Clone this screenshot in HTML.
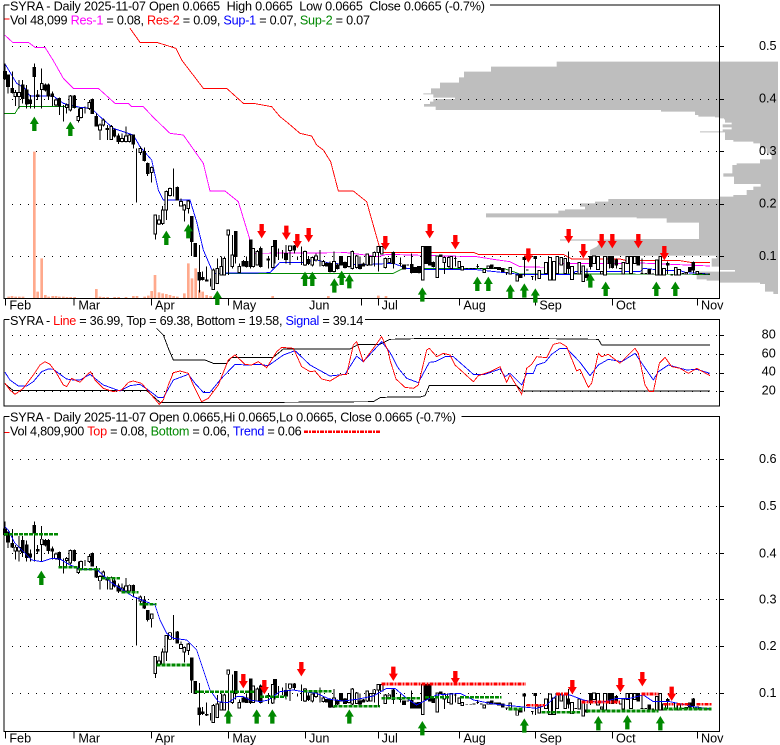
<!DOCTYPE html>
<html lang="en"><head><meta charset="utf-8"><title>SYRA chart</title>
<style>
html,body{margin:0;padding:0;background:#fff;width:780px;height:745px;overflow:hidden}
svg{display:block}
text{font-family:"Liberation Sans",Arial,sans-serif;font-size:38px;fill:#000}
.l{fill:none;stroke-width:2.7;shape-rendering:crispEdges}
.f{fill:none;stroke-width:3;shape-rendering:crispEdges}
.d{fill:none;stroke-width:8;shape-rendering:crispEdges}
</style></head><body>
<svg xmlns="http://www.w3.org/2000/svg" width="780" height="745" viewBox="0 0 2340 2235">
<defs>
<pattern id="dots" patternUnits="userSpaceOnUse" x="12" y="0" width="24" height="3"><rect x="0" y="0" width="3" height="3" fill="#000"/></pattern>
<path id="u" fill="#008800" d="M0,0l13.5,22h-7v21h-13v-21h-7z"/>
<path id="n" fill="#ff0000" d="M0,43l13.5,-22h-7v-21h-13v21h-7z"/>
<g id="c" shape-rendering="crispEdges">
<path fill="none" stroke="#000" stroke-width="3" d="M15,190V240M24,225V280M37,215V280M46,270V318M57,240V325M68,240V310M80,255V325M91,285V325M103,190V325M113,270V300M125,205V325M136,250V275M145,250V300M157,275V318M168,295V320M178,292V345M190,315V365M200,310V340M211,285V335M223,285V325M235,325V368M243,322V355M255,320V340M268,300V330M277,295V340M289,340V380M300,370V420M310,355V380M322,375V420M334,375V420M343,385V412M355,400V432M366,400V428M378,380V428M388,402V428M400,403V445M409,445V608M421,440V465M433,442V485M443,488V528M455,500V548M466,643V718M477,645V675M488,618V675M499,572V660M510,563V590M521,505V590M532,560V602M543,595V620M553,612V665M565,600V640M575,650V768M586,730V768M598,735V878M608,815V842M620,800V845M632,835V860M640,805V870M652,775V850M664,770V825M673,770V825M685,690V825M697,705V805M707,695V790M718,790V818M730,780V800M740,770V802M752,720V805M760,745V802M772,750V797M782,740V803M805,768V805M818,738V805M825,722V790M835,745V780M848,750V775M858,735V790M870,738V795M883,735V760M893,770V780M905,740V795M915,752V798M925,770V795M937,770V800M948,760V785M960,750V800M970,780V800M980,788V800M990,785V818M1002,755V818M1013,790V808M1023,768V797M1035,785V806M1047,768V803M1057,752V808M1070,765V806M1080,770V808M1090,788V800M1102,760V798M1123,755V800M1135,738V815M1156,772V806M1180,755V805M1201,772V800M1235,760V820M1257,798V820M1279,738V792M1289,738V797M1300,785V802M1333,770V822M1346,770V802M1366,770V800M1433,792V806M1520,818V825M1573,770V830M1597,830V840M1606,770V842M1705,755V820M1761,805V835M1772,768V808M1828,768V805M1837,768V805M1849,775V805M1926,775V822M2003,785V822M2080,785V820"/>
<path fill="#000" stroke="#000" stroke-width="3" d="M11,215h8V235h-8zM20,225h8V260h-8zM33,265h8V277h-8zM64,255h8V295h-8zM76,270h8V312h-8zM87,300h8V310h-8zM99,203h8V230h-8zM109,285h8V290h-8zM132,255h8V270h-8zM141,255h8V288h-8zM153,282h8V290h-8zM174,295h8V318h-8zM219,288h8V322h-8zM273,298h8V340h-8zM285,350h8V378h-8zM318,385h8V388h-8zM339,390h8V408h-8zM351,408h8V425h-8zM396,405h8V432h-8zM429,455h8V482h-8zM439,490h8V520h-8zM528,562h8V600h-8zM571,650h8V725h-8zM582,730h8V770h-8zM594,818h8V840h-8zM604,832h8V838h-8zM616,840h8V843h-8zM703,695h8V770h-8zM726,785h8V798h-8zM736,785h8V800h-8zM748,720h8V800h-8zM778,745h8V800h-8zM801,777h8V780h-8zM821,722h8V768h-8zM854,760h8V778h-8zM879,738h8V750h-8zM921,778h8V790h-8zM976,790h8V798h-8zM986,790h8V815h-8zM1009,795h8V805h-8zM1019,770h8V795h-8zM1031,788h8V803h-8zM1076,795h8V805h-8zM1086,792h8V798h-8zM1176,757h8V790h-8zM1208,795h8V807h-8zM1231,793h8V818h-8zM1242,802h8V818h-8zM1253,800h8V818h-8zM1275,740h8V790h-8zM1285,740h8V795h-8zM1296,787h8V800h-8zM1318,765h8V770h-8zM1471,795h8V805h-8zM1483,802h8V806h-8zM1493,802h8V808h-8zM1504,805h8V815h-8zM1558,823h8V832h-8zM1569,772h8V778h-8zM1602,770h8V776h-8zM1701,788h8V805h-8zM1757,825h8V832h-8zM1768,770h8V800h-8zM1824,770h8V790h-8zM1833,770h8V803h-8zM1845,780h8V795h-8zM1911,770h8V795h-8zM1944,808h8V822h-8zM1999,790h8V795h-8zM2065,802h8V815h-8zM2076,788h8V810h-8z"/>
<path fill="#fff" stroke="#000" stroke-width="3" d="M42,277h8V290h-8zM53,277h8V290h-8zM121,250h8V268h-8zM164,300h8V315h-8zM196,315h8V322h-8zM207,288h8V330h-8zM231,350h8V362h-8zM239,325h8V352h-8zM264,308h8V325h-8zM296,375h8V390h-8zM306,360h8V375h-8zM330,380h8V418h-8zM362,415h8V425h-8zM374,408h8V425h-8zM384,405h8V425h-8zM417,445h8V458h-8zM451,502h8V518h-8zM462,645h8V702h-8zM473,660h8V672h-8zM484,630h8V670h-8zM495,575h8V630h-8zM506,565h8V587h-8zM539,605h8V618h-8zM549,615h8V630h-8zM561,603h8V625h-8zM636,810h8V868h-8zM648,805h8V850h-8zM660,800h8V825h-8zM669,775h8V825h-8zM681,690h8V705h-8zM693,765h8V800h-8zM714,800h8V818h-8zM756,745h8V800h-8zM768,755h8V795h-8zM814,740h8V802h-8zM866,738h8V752h-8zM911,755h8V795h-8zM933,772h8V795h-8zM944,768h8V780h-8zM966,785h8V797h-8zM998,785h8V815h-8zM1043,770h8V800h-8zM1053,755h8V805h-8zM1066,768h8V803h-8zM1098,762h8V795h-8zM1108,770h8V795h-8zM1119,757h8V770h-8zM1131,740h8V758h-8zM1141,740h8V762h-8zM1152,775h8V803h-8zM1164,775h8V787h-8zM1264,740h8V840h-8zM1308,768h8V832h-8zM1329,772h8V788h-8zM1342,772h8V800h-8zM1350,770h8V805h-8zM1374,785h8V803h-8zM1383,800h8V810h-8zM1449,808h8V818h-8zM1461,798h8V806h-8zM1527,802h8V822h-8zM1548,825h8V843h-8zM1614,812h8V835h-8zM1634,788h8V820h-8zM1646,772h8V840h-8zM1658,785h8V840h-8zM1668,770h8V820h-8zM1680,772h8V795h-8zM1692,775h8V820h-8zM1712,800h8V838h-8zM1734,788h8V822h-8zM1746,798h8V845h-8zM1778,768h8V790h-8zM1790,770h8V808h-8zM1801,815h8V822h-8zM1811,770h8V825h-8zM1866,788h8V822h-8zM1878,770h8V790h-8zM1889,770h8V820h-8zM1900,770h8V790h-8zM1966,780h8V825h-8zM1977,770h8V825h-8zM1988,805h8V825h-8zM2023,802h8V825h-8zM2033,808h8V825h-8zM2055,817h8V822h-8zM2088,815h8V822h-8z"/>
<path fill="none" stroke="#000" stroke-width="3" d="M1197,790h8M1219,795h8M1362,775h8M1396,806h8M1408,806h8M1418,805h8M1429,800h8M1440,805h8M1516,818h8M1578,810h8M1593,830h8M1723,820h8M1857,805h8M1922,820h8M1933,820h8M1954,822h8M2011,825h8M2044,820h8M2099,820h8M2111,822h8M2122,822h8"/>
</g>
</defs>

<!-- volume by price -->
<path fill="#bebebe" transform="translate(1560,0)" d="M774,185H110V200H-87V215H-168V232H-183V248H-240V265H-267V280H-290V283H-260V293H-195V297H-260V305H-270V312H-288V320H-253V330H423V335H525V345H535V350H585V352H600V355H612V358H615V368H635V373H608V382H635V388H608V394H540V397H615V420H640V425H700V430H720V445H740V460H755V478H720V490H650V495H637V520H610V530H642V552H722V560H700V570H680V585H640V590H600V597H265V605H225V610H180V620H195V628H135V632H115V640H-102V652H350V655H440V668H537V717H360V718H120V722H245L230,740L210,750V767H590V775H575V800H600V810H645V815H530V838H560V842H600V848H720V852H735V875H760V882H774Z"/>

<!-- volume bars -->
<path fill="#ffa98c" d="M99,455h8V895h-8zM109,875h8V895h-8zM121,775h8V895h-8zM132,885h8V895h-8zM142,890h8V895h-8zM154,888h8V895h-8zM164,888h8V895h-8zM174,890h8V895h-8zM285,867h8V895h-8zM32,888h8V895h-8zM22,890h8V895h-8zM43,890h8V895h-8zM54,890h8V895h-8zM65,890h8V895h-8zM186,890h8V895h-8zM197,891h8V895h-8zM208,891h8V895h-8zM220,891h8V895h-8zM296,890h8V895h-8zM307,891h8V895h-8zM319,891h8V895h-8zM340,891h8V895h-8zM352,891h8V895h-8zM374,891h8V895h-8zM396,888h8V895h-8zM407,888h8V895h-8zM430,890h8V895h-8zM441,887h8V895h-8zM451,873h8V895h-8zM461,825h8V895h-8zM473,877h8V895h-8zM484,880h8V895h-8zM495,882h8V895h-8zM506,885h8V895h-8zM517,888h8V895h-8zM528,890h8V895h-8zM549,880h8V895h-8zM561,790h8V895h-8zM572,835h8V895h-8zM583,805h8V895h-8zM594,870h8V895h-8zM604,875h8V895h-8zM616,885h8V895h-8zM628,888h8V895h-8zM814,888h8V895h-8zM981,888h8V895h-8zM1131,887h8V895h-8zM1154,888h8V895h-8z"/>

<!-- grids -->
<g fill="url(#dots)" shape-rendering="crispEdges">
<rect x="36" y="138" width="2127" height="3"/><rect x="36" y="297" width="2127" height="3"/><rect x="36" y="453" width="2127" height="3"/><rect x="36" y="612" width="2127" height="3"/><rect x="36" y="768" width="2127" height="3"/>
<rect x="36" y="1005" width="2127" height="3"/><rect x="36" y="1062" width="2127" height="3"/><rect x="36" y="1119" width="2127" height="3"/><rect x="36" y="1173" width="2127" height="3"/>
<rect x="36" y="1377" width="2127" height="3"/><rect x="36" y="1518" width="2127" height="3"/><rect x="36" y="1659" width="2127" height="3"/><rect x="36" y="1797" width="2127" height="3"/><rect x="36" y="1938" width="2127" height="3"/><rect x="36" y="2079" width="2127" height="3"/>
</g>

<!-- frames and ticks -->
<path class="f" stroke="#000" d="M12,15H28M1470,15H2158V895H12V15M12,958H28M1095,958H2158V1218H12V958M12,1250H28M1385,1250H2158V2194H12V1250"/>
<path class="f" stroke="#000" d="M2158,139.500H2172M2158,298.500H2172M2158,454.500H2172M2158,613.500H2172M2158,769.500H2172M2158,1006.500H2172M2158,1063.500H2172M2158,1120.500H2172M2158,1174.500H2172M2158,1378.500H2172M2158,1519.500H2172M2158,1660.500H2172M2158,1798.500H2172M2158,1939.500H2172M2158,2080.500H2172"/>
<path class="f" stroke="#000" d="M17,895V917M222,895V917M455,895V917M686,895V917M1085,895V917M1135,895V917M1378,895V917M1606,895V917M1837,895V917M2092,895V917M17,2194V2216M222,2194V2216M455,2194V2216M686,2194V2216M916,2194V2216M1135,2194V2216M1378,2194V2216M1606,2194V2216M1837,2194V2216M2092,2194V2216"/>
<path class="f" stroke="#ff0000" d="M14,57H28M14,1297H28"/>

<!-- top panel overlays -->
<polyline class="l" stroke="#008800" points="14,340 45,340 58,319 170,319 240,322"/>
<polyline class="l" stroke="#008800" points="640,820 1180,820 1210,805 1510,805 1560,822 2130,823"/>
<polyline class="l" stroke="#ff00ff" points="14,105 38,127 85,127 105,142 135,142 160,182 190,235 220,265 295,265 345,310 385,310 395,320 430,320 460,352 510,400 550,405 610,490 630,573 675,573 715,605 750,720 755,760 1040,758 1135,770 1160,763 1340,768 1430,770 1480,778 1530,785 1560,800 1635,802 1660,790 1870,790 1875,787 2130,798"/>
<polyline class="l" stroke="#ff0000" points="390,85 420,127 470,127 528,145 545,180 610,265 680,265 730,310 760,310 815,320 840,350 865,370 900,400 935,408 950,435 970,450 992,485 1015,573 1060,573 1100,605 1138,740 1150,757 1420,757 1435,763 1690,763 1715,777 1860,777 1880,782 2040,782 2070,787 2130,787"/>
<polyline class="l" stroke="#0000ff" points="14,190 50,250 75,265 90,288 160,288 190,310 240,322 275,325 300,350 340,385 400,405 420,440 455,480 475,570 490,600 570,600 590,665 610,750 640,820 810,818 840,787 910,787 950,780 990,790 1050,793 1110,793 1180,790 1220,805 1260,808 1420,808 1560,823 1720,823 1725,815 1920,815 1930,805 1960,808 2000,812 2040,812 2060,818 2130,822"/>
<use href="#c"/>
<g>
<use href="#u" x="103" y="350"/><use href="#u" x="211" y="365"/><use href="#u" x="499" y="692"/><use href="#u" x="565" y="672"/><use href="#u" x="652" y="872"/><use href="#u" x="915" y="815"/><use href="#u" x="937" y="815"/><use href="#u" x="1003" y="835"/><use href="#u" x="1025" y="812"/><use href="#u" x="1048" y="822"/><use href="#u" x="1267" y="862"/><use href="#u" x="1432" y="830"/><use href="#u" x="1465" y="830"/><use href="#u" x="1531" y="853"/><use href="#u" x="1573" y="850"/><use href="#u" x="1606" y="865"/><use href="#u" x="1771" y="820"/><use href="#u" x="1817" y="845"/><use href="#u" x="1969" y="845"/><use href="#u" x="2026" y="845"/>
<use href="#n" x="785" y="672"/><use href="#n" x="859" y="677"/><use href="#n" x="892" y="702"/><use href="#n" x="926" y="684"/><use href="#n" x="1156" y="708"/><use href="#n" x="1289" y="672"/><use href="#n" x="1366" y="705"/><use href="#n" x="1585" y="745"/><use href="#n" x="1706" y="687"/><use href="#n" x="1750" y="732"/><use href="#n" x="1805" y="702"/><use href="#n" x="1837" y="702"/><use href="#n" x="1915" y="702"/><use href="#n" x="1993" y="738"/>
</g>

<!-- RSI panel -->
<g transform="translate(0,915)">
<polyline class="l" stroke="#000" points="470,70 490,90 505,130 520,165 615,165 640,175 680,175 695,157 820,157 850,132 1050,132 1075,118 1140,118 1170,103 1285,100 1560,100 1795,103 1805,120 2130,120"/>
<polyline class="l" stroke="#000" points="15,237 40,257 440,257 480,292 840,292 1120,290 1140,278 1170,276 1260,276 1275,272 1288,241 1550,241 1565,258 2130,258"/>
<polyline class="l" stroke="#0000ff" points="15,202 30,225 55,243 80,243 100,230 125,200 145,192 160,193 180,208 200,222 220,225 240,225 270,208 310,240 360,258 390,242 420,238 445,255 475,278 490,278 520,225 565,208 585,235 610,262 630,262 660,225 705,178 740,180 775,178 805,182 850,150 885,137 930,180 990,213 1035,208 1070,153 1090,170 1145,110 1170,142 1195,190 1220,220 1255,233 1288,172 1305,170 1335,155 1360,155 1420,208 1455,208 1500,192 1515,215 1530,205 1565,240 1580,205 1600,205 1610,180 1635,172 1655,148 1680,130 1700,130 1740,172 1770,212 1795,180 1825,163 1865,170 1905,145 1960,225 1975,200 2005,180 2060,195 2090,193 2130,205"/>
<polyline class="l" stroke="#ff0000" points="15,235 30,255 45,268 70,250 100,210 120,180 135,170 150,178 170,205 190,240 200,245 215,220 240,232 260,210 272,200 285,225 310,250 340,260 365,255 385,232 400,228 425,235 450,265 478,298 490,285 505,240 520,203 540,198 565,205 580,240 605,290 625,280 655,240 685,165 705,150 735,178 755,180 775,170 800,188 830,140 845,127 880,130 905,185 930,200 945,198 965,222 990,228 1020,210 1040,208 1060,120 1070,110 1090,170 1120,130 1145,95 1165,140 1170,165 1188,222 1215,247 1240,250 1255,240 1280,135 1288,130 1310,155 1330,145 1350,150 1365,180 1420,230 1435,212 1470,200 1500,185 1520,232 1530,210 1565,268 1580,190 1595,178 1610,155 1640,158 1660,118 1680,113 1700,125 1730,198 1740,193 1765,247 1775,235 1795,145 1805,155 1825,148 1860,175 1905,130 1915,145 1935,240 1948,260 1960,260 1978,175 1995,157 2015,185 2040,190 2065,205 2090,190 2130,212"/>
</g>

<!-- bottom panel -->
<use href="#c" transform="translate(0,1395) scale(1,0.8905)"/>
<polyline class="l" stroke="#0000ff" points="15,1580 25,1590 45,1630 70,1655 95,1680 125,1685 155,1675 180,1677 210,1695 245,1708 290,1708 330,1745 400,1790 430,1802 465,1815 480,1860 500,1900 520,1915 560,1920 590,1950 610,2010 630,2070 655,2105 685,2108 710,2090 730,2090 750,2100 780,2105 805,2100 840,2075 880,2070 910,2075 950,2080 990,2098 1030,2103 1070,2098 1120,2088 1160,2065 1185,2065 1220,2095 1250,2115 1275,2102 1310,2085 1380,2080 1420,2100 1480,2112 1560,2120 1610,2125 1640,2115 1670,2085 1710,2085 1750,2100 1800,2108 1850,2095 1890,2095 1930,2085 1960,2105 2010,2105 2080,2120 2135,2127"/>
<g class="d" stroke="#008800" stroke-dasharray="12 3">
<path d="M12,1603H175M175,1702H235M235,1708H300M305,1735H360M365,1777H415M418,1813H470M470,1995H570M585,2075H765M780,2090H860M910,2074H995M1000,2119H1140M1145,2095H1260M1275,2092H1350M1380,2092H1505M1525,2127H1570M1625,2137H1740M1760,2133H1975M1990,2127H2135"/>
</g>
<g class="d" stroke="#ff0000" stroke-dasharray="12 3 6 3">
<path d="M1145,2052H1578M1580,2116H1635M1668,2082H1705M1745,2106H1860M1925,2082H1975M1990,2113H2020M2030,2113H2070M2090,2113H2138"/>
</g>
<g>
<use href="#u" x="124" y="1712"/><use href="#u" x="685" y="2128"/><use href="#u" x="770" y="2128"/><use href="#u" x="817" y="2128"/><use href="#u" x="1048" y="2128"/><use href="#u" x="1267" y="2163"/><use href="#u" x="1573" y="2155"/><use href="#u" x="1795" y="2148"/><use href="#u" x="1882" y="2145"/><use href="#u" x="1981" y="2148"/>
<use href="#n" x="730" y="2022"/><use href="#n" x="793" y="2040"/><use href="#n" x="904" y="1986"/><use href="#n" x="1180" y="2000"/><use href="#n" x="1366" y="2013"/><use href="#n" x="1717" y="2040"/><use href="#n" x="1861" y="2034"/><use href="#n" x="1927" y="2016"/><use href="#n" x="2015" y="2060"/>
</g>

<!-- titles -->
<text x="30" y="32" textLength="1425" lengthAdjust="spacing">SYRA - Daily 2025-11-07 Open 0.0665&#160; High 0.0665&#160; Low 0.0665&#160; Close 0.0665 (-0.7%)</text>
<text x="30" y="73" textLength="1080" lengthAdjust="spacing">Vol 48,099 <tspan style="fill:#ff00ff">Res-1</tspan> = 0.08, <tspan style="fill:#ff0000">Res-2</tspan> = 0.09, <tspan style="fill:#0000ff">Sup-1</tspan> = 0.07, <tspan style="fill:#008800">Sup-2</tspan> = 0.07</text>
<text x="30" y="975" textLength="1060" lengthAdjust="spacing">SYRA - <tspan style="fill:#ff0000">Line</tspan> = 36.99, Top = 69.38, Bottom = 19.58, <tspan style="fill:#0000ff">Signal</tspan> = 39.14</text>
<text x="30" y="1265" textLength="1338" lengthAdjust="spacing">SYRA - Daily 2025-11-07 Open 0.0665,Hi 0.0665,Lo 0.0665, Close 0.0665 (-0.7%)</text>
<text x="30" y="1307" textLength="875" lengthAdjust="spacing">Vol 4,809,900 <tspan style="fill:#ff0000">Top</tspan> = 0.08, <tspan style="fill:#008800">Bottom</tspan> = 0.06, <tspan style="fill:#0000ff">Trend</tspan> = 0.06</text>
<path class="d" stroke="#ff0000" stroke-dasharray="12 3 6 3" d="M912,1295H1140"/>

<!-- month labels -->
<text x="28" y="928">Feb</text><text x="235" y="928">Mar</text><text x="465" y="928">Apr</text><text x="697" y="928">May</text><text x="927" y="928">Jun</text><text x="1145" y="928">Jul</text><text x="1390" y="928">Aug</text><text x="1618" y="928">Sep</text><text x="1848" y="928">Oct</text><text x="2103" y="928">Nov</text>
<text x="28" y="2228">Feb</text><text x="235" y="2228">Mar</text><text x="465" y="2228">Apr</text><text x="697" y="2228">May</text><text x="927" y="2228">Jun</text><text x="1145" y="2228">Jul</text><text x="1390" y="2228">Aug</text><text x="1618" y="2228">Sep</text><text x="1848" y="2228">Oct</text><text x="2103" y="2228">Nov</text>

<!-- axis labels -->
<text x="2277" y="150">0.5</text><text x="2277" y="308">0.4</text><text x="2277" y="465">0.3</text><text x="2277" y="623">0.2</text><text x="2277" y="780">0.1</text>
<text x="2285" y="1015">80</text><text x="2285" y="1072">60</text><text x="2285" y="1127">40</text><text x="2285" y="1183">20</text>
<text x="2277" y="1389">0.6</text><text x="2277" y="1530">0.5</text><text x="2277" y="1672">0.4</text><text x="2277" y="1810">0.3</text><text x="2277" y="1950">0.2</text><text x="2277" y="2091">0.1</text>
</svg>
</body></html>
